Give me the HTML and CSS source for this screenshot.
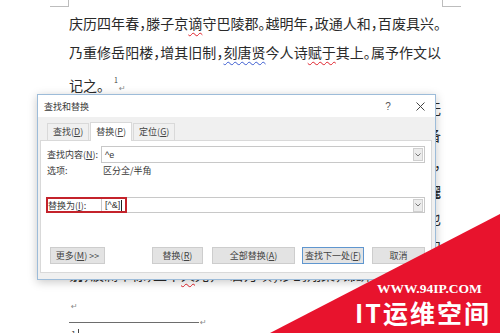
FILE: index.html
```html
<!doctype html>
<html>
  <head>
    <meta charset="UTF-8" />
    <link rel="stylesheet" href="styles.css">
  </head>
  <body>
    <div class="corner corner-left"></div>
    <div class="corner corner-right"></div>

    <div class="page">
      <div class="line">庆历四年春，滕子京<span class="typo">谪</span>守巴陵郡。越明年，政通人和，百废具兴。</div>
      <div class="line">乃重修岳阳楼，增其旧制，<span class="gram">刻唐贤</span>今人诗<span class="typo">赋于</span>其上。属予作文以</div>
      <div class="line short">记之。<sup class="ref">1</sup><span class="pmark">↵</span></div>
      <div class="line tight">予观夫巴陵胜状，在洞庭一湖。衔远山，吞长江，浩浩汤汤，横无</div>
      <div class="line tight">际涯；朝晖夕阴，气象万千。此则岳阳楼之大观也，前人之述备</div>
      <div class="line tight">矣。然则北通巫峡，南极潇湘，迁客骚人，多会于此，览物之情，得无</div>
      <div class="line tight">异乎？若夫淫雨霏霏，连月不开，阴风怒号，浊浪排空；日星隐曜</div>
      <div class="line tight">山岳潜形；商旅不行，樯倾楫摧；薄暮冥冥，虎啸猿啼。登斯楼也</div>
      <div class="line tight">则有去国怀乡，忧谗畏讥，满目萧然，感极而悲者矣。至若春和景</div>
      <div class="line tight short">明，波澜不惊，上下<span class="typo">天</span>光，一碧万顷；沙鸥翔集，锦鳞</div>
      <div class="empty"><span class="pmark">↵</span></div>
      <div class="separator"><span class="rule"></span><span class="pmark">↵</span></div>
      <div class="note">1 <span class="caret"></span></div>
    </div>

    <div class="dialog">
      <div class="titlebar">
        <span class="title">查找和替换</span>
        <span class="help">?</span>
        <span class="close">
          <svg width="9" height="9" viewBox="0 0 9 9"><path d="M0.5 0.5 L8.5 8.5 M8.5 0.5 L0.5 8.5" stroke="#444" stroke-width="1" fill="none"/></svg>
        </span>
      </div>
      <div class="tabs">
        <div class="tab">查找(<u>D</u>)</div>
        <div class="tab active">替换(<u>P</u>)</div>
        <div class="tab">定位(<u>G</u>)</div>
      </div>
      <div class="panel">
        <div class="row find">
          <span class="label">查找内容(<u>N</u>):</span>
          <div class="combo">
            <span class="value">^e</span>
            <span class="drop"><svg width="6" height="4" viewBox="0 0 6 4"><path d="M0.5 0.5 L3 3 L5.5 0.5" stroke="#777" fill="none"/></svg></span>
          </div>
        </div>
        <div class="row opts">
          <span class="label">选项:</span>
          <span class="optval">区分全/半角</span>
        </div>
        <div class="row repl">
          <span class="label">替换为(<u>I</u>):</span>
          <div class="combo">
            <span class="value">[^&amp;]</span><span class="cursor"></span>
            <span class="drop"><svg width="6" height="4" viewBox="0 0 6 4"><path d="M0.5 0.5 L3 3 L5.5 0.5" stroke="#777" fill="none"/></svg></span>
          </div>
          <div class="highlight"></div>
        </div>
        <div class="buttons">
          <div class="btn more">更多(<u>M</u>) &gt;&gt;</div>
          <div class="btn replace">替换(<u>R</u>)</div>
          <div class="btn replace-all">全部替换(<u>A</u>)</div>
          <div class="btn find-next">查找下一处(<u>F</u>)</div>
          <div class="btn cancel">取消</div>
        </div>
      </div>
    </div>

    <svg class="ribbon" width="500" height="333" viewBox="0 0 500 333">
      <polygon points="270,333 500,214 500,333" fill="#e8132d"/>
    </svg>
    <div class="wm-url">WWW.94IP.COM</div>
    <div class="wm-name">IT运维空间</div>
  </body>
</html>
```

FILE: styles.css
```css
html,
body {
  margin: 0;
  width: 500px;
  height: 333px;
  overflow: hidden;
}
body {
  position: relative;
  background: #fff;
  font-family: "Noto Sans CJK SC", sans-serif;
}

/* page margin marks */
.corner {
  position: absolute;
  top: -1px;
  height: 7px;
  width: 18px;
  border-bottom: 1px solid #bdbdbd;
}
.corner-left {
  left: 50px;
  border-right: 1px solid #bdbdbd;
}
.corner-right {
  left: 442px;
  border-left: 1px solid #bdbdbd;
}

/* document text */
.page {
  padding: 9px 0 0 69px;
  width: 372px;
  color: #2a2a2a;
  font-size: 14px;
  font-feature-settings: "halt";
}
.line {
  height: 28.5px;
  line-height: 28.5px;
  text-align: justify;
  text-align-last: justify;
}
.line.tight {
  height: 27.7px;
  line-height: 27.7px;
}
.line.short {
  text-align-last: left;
}
.typo {
  text-decoration: underline wavy #e0202a;
  text-decoration-thickness: 1px;
  text-underline-offset: 3px;
}
.gram {
  text-decoration: underline wavy #3a5bd0;
  text-decoration-thickness: 1px;
  text-underline-offset: 3px;
}
.ref {
  font-size: 7px;
  margin-left: 10px;
  vertical-align: 8px;
  color: #444;
}
.pmark {
  font-family: "DejaVu Sans", sans-serif;
  font-size: 8px;
  color: #8a8a8a;
  margin-left: 1px;
}
.empty {
  height: 22px;
  line-height: 31px;
  padding-left: 1px;
}
.separator {
  margin-top: 11px;
  display: flex;
  align-items: center;
  height: 2px;
}
.rule {
  width: 130px;
  border-top: 1px solid #6d6d6d;
}
.note {
  margin-top: 6px;
  font-size: 9px;
  color: #444;
  padding-left: 2px;
  line-height: 10px;
}
.caret {
  display: inline-block;
  width: 1px;
  height: 9px;
  background: #444;
}

/* find & replace dialog */
.dialog {
  position: absolute;
  left: 37px;
  top: 94px;
  width: 399px;
  height: 186px;
  box-sizing: border-box;
  border: 1px solid #9dbcd9;
  background: #f0f0f0;
  box-shadow: 0 2px 9px rgba(0, 0, 0, 0.22);
  color: #3a3a3a;
  font-size: 9px;
  font-feature-settings: normal;
}
.titlebar {
  height: 22px;
  display: flex;
  align-items: center;
  padding: 0 7px 0 6px;
  background: #fff;
}
.title {
  flex: 1;
}
.help {
  width: 10px;
  text-align: center;
  margin-right: 19px;
  font-family: "Liberation Sans", sans-serif;
  font-size: 10px;
  color: #555;
}
.close {
  width: 16px;
  display: flex;
  justify-content: center;
}
.tabs {
  height: 23px;
  display: flex;
  align-items: flex-end;
  padding-left: 9px;
}
.tab {
  height: 17px;
  line-height: 16px;
  box-sizing: border-box;
  padding: 0 5px;
  border: 1px solid #d9d9d9;
  border-bottom: none;
  margin-right: 1px;
  color: #444;
}
.tab.active {
  height: 19px;
  line-height: 18px;
  background: #fff;
  margin-bottom: -1px;
  position: relative;
  z-index: 1;
}
.panel {
  margin: 0 3px 0 2px;
  height: 133px;
  box-sizing: border-box;
  background: #fff;
  border: 1px solid #d9d9d9;
  padding: 5px 6px 0;
}
.row {
  display: flex;
  align-items: center;
}
.find {
  height: 17px;
}
.label {
  width: 54px;
  flex: none;
}
.combo {
  flex: 1;
  height: 17px;
  box-sizing: border-box;
  border: 1px solid #c8c8c8;
  display: flex;
  align-items: center;
  padding-left: 3px;
  color: #333;
}
.combo .value {
  font-family: "Liberation Sans", sans-serif;
}
.drop {
  margin-left: auto;
  width: 10px;
  height: 13px;
  margin-right: 1px;
  box-sizing: border-box;
  border: 1px solid #cfcfcf;
  background: #ececec;
  display: flex;
  align-items: center;
  justify-content: center;
}
.opts {
  margin-top: 1px;
  height: 12px;
}
.optval {
  margin-left: 2px;
}
.repl {
  margin-top: 21px;
  height: 16px;
  position: relative;
}
.repl .combo {
  height: 16px;
}
.repl .label {
  padding-left: 1px;
  width: 53px;
}
.cursor {
  width: 1px;
  height: 11px;
  background: #222;
  margin-left: 1px;
}
.highlight {
  position: absolute;
  left: -1px;
  top: 0;
  width: 81px;
  height: 16px;
  box-sizing: border-box;
  border: 2px solid #c4232b;
}
.buttons {
  margin-top: 34px;
  display: flex;
  height: 17px;
}
.btn {
  height: 17px;
  line-height: 15px;
  box-sizing: border-box;
  border: 1px solid #cdcdcd;
  background: #e3e3e3;
  text-align: center;
  color: #444;
}
.btn.more {
  width: 55px;
  margin-left: 3px;
}
.btn.replace {
  width: 51px;
  margin-left: 47px;
}
.btn.replace-all {
  width: 83px;
  margin-left: 9px;
}
.btn.find-next {
  width: 62px;
  margin-left: 7px;
  border-color: #5f96cf;
}
.btn.cancel {
  width: 53px;
  margin-left: 8px;
}

/* watermark */
.ribbon {
  position: absolute;
  left: 0;
  top: 0;
}
.wm-url {
  position: absolute;
  left: 377px;
  top: 281px;
  font-family: "Liberation Serif", serif;
  font-weight: bold;
  font-size: 13.5px;
  line-height: 16px;
  color: #fff;
}
.wm-name {
  position: absolute;
  left: 355px;
  top: 297px;
  font-family: "Noto Sans CJK SC", sans-serif;
  font-weight: bold;
  font-size: 25px;
  line-height: 30px;
  letter-spacing: 2px;
  color: #fff;
  white-space: nowrap;
}
```
